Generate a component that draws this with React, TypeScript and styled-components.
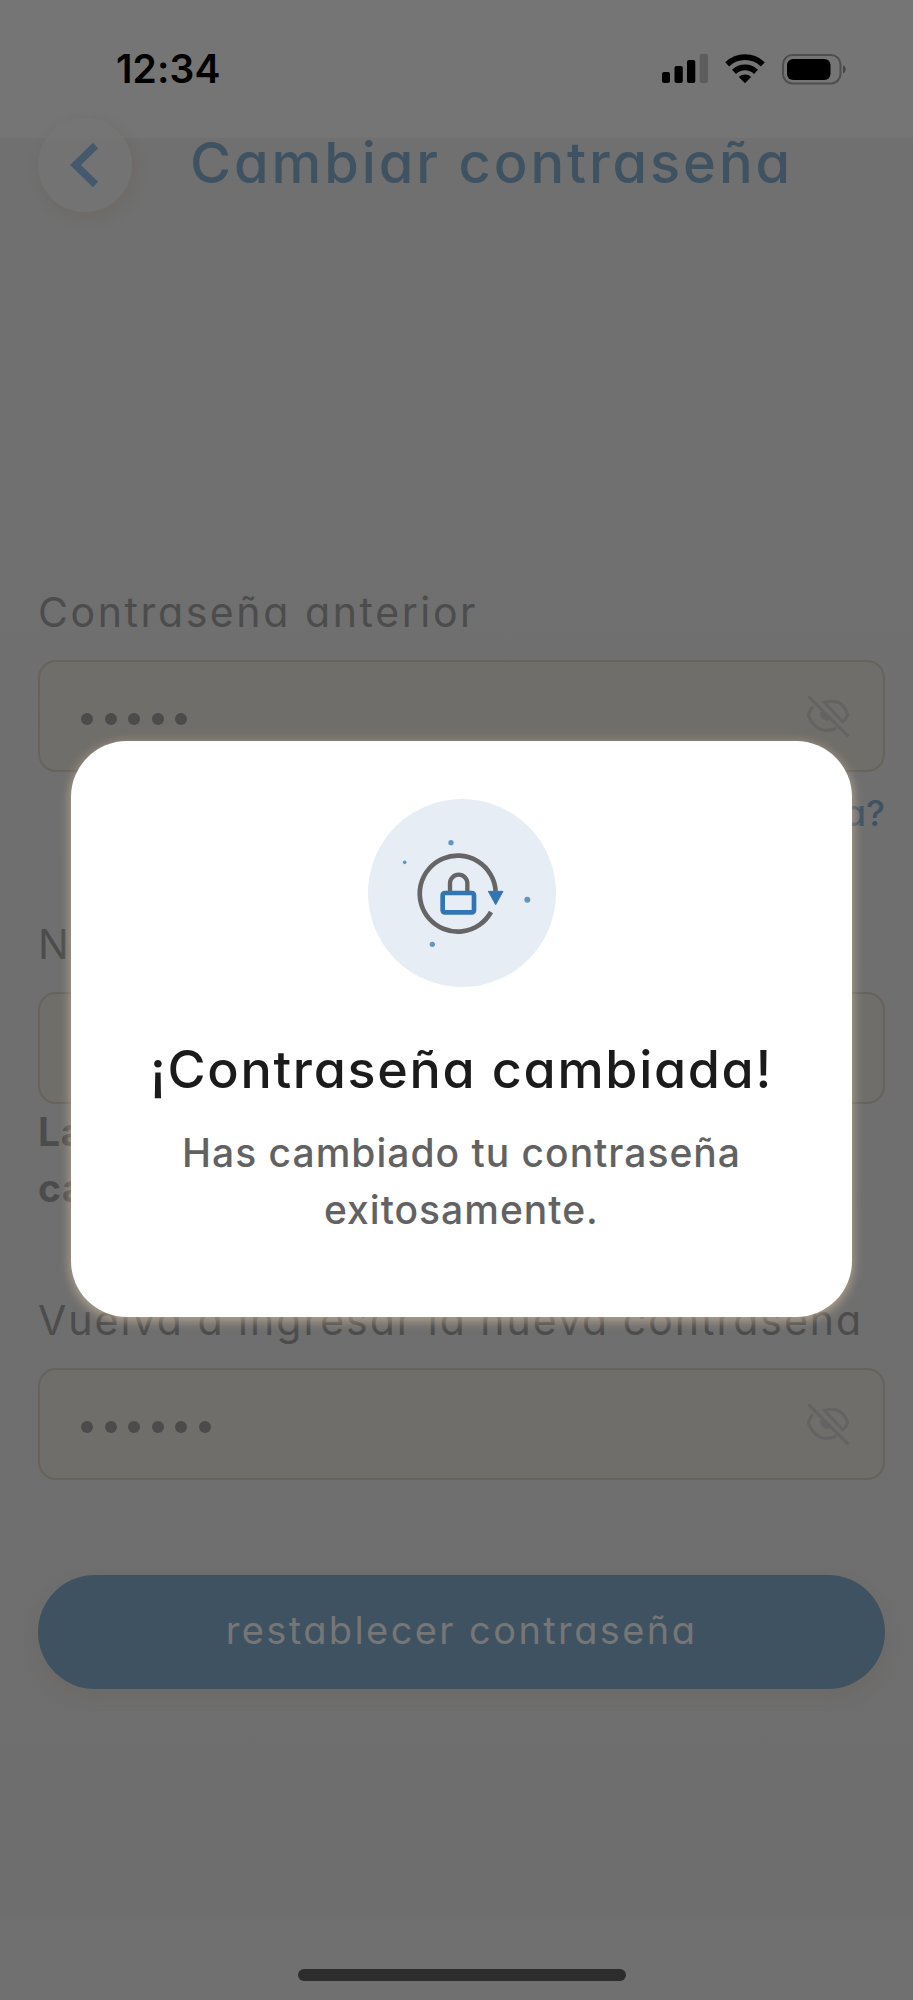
import React from 'react';
import styled, { createGlobalStyle } from 'styled-components';

const GlobalStyle = createGlobalStyle`
  *, *::before, *::after { box-sizing: border-box; }
  body {
    margin: 0;
    background: #707070;
    font-family: Inter, 'Liberation Sans', sans-serif;
  }
`;

const rounded = `
  font-family: Inter, 'Liberation Sans', sans-serif;
  font-feature-settings: 'cv11' 1;
`;

const Screen = styled.div`
  width: 913px;
  height: 2000px;
  display: flex;
  flex-direction: column;
  overflow: hidden;
  background: linear-gradient(#757575 138px, #707070 138px, #6e6e6e 1918px, #707070 1920px);
`;

const StatusBar = styled.header`
  height: 118px;
  padding: 41px 66px 0 116px;
  display: flex;
  align-items: flex-start;
  justify-content: space-between;
`;

const Clock = styled.span`
  font-size: 39px;
  line-height: 56px;
  font-weight: 600;
  letter-spacing: 0.1px;
  color: #000;
`;

const StatusIcons = styled.div`
  height: 56px;
  display: flex;
  align-items: center;
  gap: 17px;
`;

const TitleBar = styled.div`
  height: 94px;
  padding-left: 38px;
  display: flex;
  align-items: center;
`;

const BackButton = styled.button`
  width: 94px;
  height: 94px;
  padding: 0;
  border: 0;
  border-radius: 50%;
  display: grid;
  place-items: center;
  background: linear-gradient(#757575 20px, #737373 20px);
  box-shadow: 3px 5px 12px rgba(105, 94, 80, 0.3);
`;

const PageTitle = styled.h1`
  ${rounded}
  margin: 0 0 5px 58px;
  font-size: 56px;
  line-height: 64px;
  font-weight: 450;
  letter-spacing: 2.9px;
  white-space: nowrap;
  color: #3f5261;
`;

const Form = styled.form`
  padding: 375px 28px 0 38px;
  display: flex;
  flex-direction: column;
`;

const Label = styled.label<{ $gap?: number; $spacing: number }>`
  ${rounded}
  margin-top: ${(p) => p.$gap ?? 0}px;
  padding-top: 1px;
  font-size: 41px;
  line-height: 48px;
  height: 48px;
  letter-spacing: ${(p) => p.$spacing}px;
  white-space: nowrap;
  color: #4c4c4c;
`;

const Field = styled.div`
  height: 112px;
  margin-top: 25px;
  padding: 0 33px 0 41px;
  border: 2px solid #67625d;
  border-radius: 18px;
  background: #706e6a;
  display: flex;
  align-items: center;
  justify-content: space-between;
`;

const Dots = styled.div`
  display: flex;
  gap: 11.5px;
  padding-top: 6px;
`;

const Dot = styled.i`
  width: 12px;
  height: 12px;
  border-radius: 50%;
  background: #4b4b4b;
`;

const ForgotLink = styled.a`
  ${rounded}
  margin-top: 17px;
  align-self: flex-end;
  font-size: 36px;
  line-height: 48px;
  font-weight: 450;
  white-space: nowrap;
  color: #3f5261;
`;

const Hint = styled.p`
  margin: 0;
  font-size: 39px;
  line-height: 56px;
  font-weight: 700;
  letter-spacing: 0.6px;
  color: #4c4c4c;
`;

const SubmitButton = styled.button`
  ${rounded}
  height: 114px;
  margin-top: 95px;
  padding: 0 0 5px;
  border: 0;
  border-radius: 57px;
  font-size: 38px;
  line-height: 48px;
  letter-spacing: 2.4px;
  color: #767676;
  background: #3f5261;
  box-shadow: 0 8px 14px rgba(108, 96, 80, 0.25);
`;

const HomeIndicator = styled.div`
  width: 328px;
  height: 12px;
  margin: auto 0 19px 298px;
  border-radius: 6px;
  background: #2d2d2d;
`;

const Overlay = styled.div`
  position: absolute;
  top: 0;
  left: 0;
  width: 913px;
  height: 2000px;
  padding: 741px 61px 0 71px;
`;

const Dialog = styled.section`
  height: 576px;
  padding-top: 58px;
  border-radius: 56px;
  display: flex;
  flex-direction: column;
  align-items: center;
  background: #fff;
  box-shadow: 0 3px 12px rgba(222, 196, 165, 0.7);
`;

const DialogTitle = styled.h2`
  ${rounded}
  margin: 51px 0 0;
  font-size: 52px;
  line-height: 64px;
  font-weight: 450;
  letter-spacing: 1.7px;
  white-space: nowrap;
  color: #1b1b1b;
`;

const DialogText = styled.p`
  margin: 22px 0 0;
  font-size: 39px;
  line-height: 57px;
  font-weight: 450;
  letter-spacing: 1px;
  text-align: center;
  color: #626262;
`;

const Signal = () => (
  <svg width="46" height="30" viewBox="0 0 46 30">
    <rect x="0" y="18" width="8" height="11" rx="2" />
    <rect x="12.5" y="12" width="8.3" height="17" rx="2" />
    <rect x="25" y="6" width="8.3" height="23" rx="2" />
    <rect x="37.7" y="0" width="8.3" height="29" rx="2" fill="#5d5d5d" />
  </svg>
);

const Wifi = () => (
  <svg width="40" height="30" viewBox="0 0 40 30">
    <g fill="none" stroke="#000" strokeWidth="5.8">
      <path d="M2.2 10.4a25.6 25.6 0 0 1 35.6 0" />
      <path d="M9 17.8a16 16 0 0 1 22 0" />
    </g>
    <path d="M20 29.2l-6.2-6.3a9 9 0 0 1 12.4 0z" />
  </svg>
);

const Battery = () => (
  <svg width="65" height="31" viewBox="0 0 65 31">
    <rect x="1" y="1" width="57.5" height="28.6" rx="9.5" fill="none" stroke="#4e4e4e" strokeWidth="2" />
    <rect x="5" y="5" width="43.5" height="21" rx="6" />
    <path d="M61 11.2c3.6 1.4 3.6 6.8 0 8.2z" fill="#454545" />
  </svg>
);

const Chevron = () => (
  <svg width="30" height="46" viewBox="0 0 30 46">
    <path d="M25.5 3.5L5.5 23l20 19.5" fill="none" stroke="#445a6c" strokeWidth="7.5" />
  </svg>
);

const EyeOff = () => (
  <svg width="43" height="43" viewBox="624 432 129 129">
    <g fill="none" stroke="#636363" strokeWidth="9">
      <path d="M628 436L748 556" />
      <path d="M641 466Q632 478 628 492Q646 538 684 538Q699 538 712 531" />
      <path d="M676 454Q730 440 746 492Q741 505 731 512Z" />
      <path d="M671 484Q668 502 690 504" strokeWidth="14" />
    </g>
  </svg>
);

const ResetBadge = () => (
  <svg width="188" height="188" viewBox="82 56 564 564">
    <circle cx="364" cy="338" r="282" fill="#e6edf4" />
    <g fill="none" stroke="#656565">
      <path d="M465 332A114 114 0 1 0 451 395" strokeWidth="14" />
      <path d="M328 336V309a26 26 0 0 1 52 0v27" strokeWidth="13" />
    </g>
    <rect x="306" y="338" width="94" height="58" rx="6" fill="none" stroke="#3275b5" strokeWidth="14" />
    <path d="M443 333h44l-22 40z" fill="#3275b5" stroke="#3275b5" strokeWidth="3" strokeLinejoin="round" />
    <g fill="#6496bd">
      <circle cx="331" cy="187" r="8" />
      <circle cx="192" cy="246" r="5.5" />
      <circle cx="560" cy="358" r="9" />
      <circle cx="275" cy="492" r="8" />
    </g>
  </svg>
);

const PasswordField = ({ count }: { count: number }) => (
  <Field>
    <Dots>
      {Array.from({ length: count }, (_, i) => (
        <Dot key={i} />
      ))}
    </Dots>
    <EyeOff />
  </Field>
);

export default function App() {
  return (
    <>
      <GlobalStyle />
      <Screen>
        <StatusBar>
          <Clock>12:34</Clock>
          <StatusIcons>
            <Signal />
            <Wifi />
            <Battery />
          </StatusIcons>
        </StatusBar>
        <TitleBar>
          <BackButton aria-label="Volver">
            <Chevron />
          </BackButton>
          <PageTitle>Cambiar contraseña</PageTitle>
        </TitleBar>
        <Form>
          <Label $spacing={2.6}>Contraseña anterior</Label>
          <PasswordField count={5} />
          <ForgotLink>¿Olvidaste tu contraseña?</ForgotLink>
          <Label $gap={82} $spacing={2.6}>Nueva contraseña</Label>
          <PasswordField count={6} />
          <Hint>
            La clave
            <br />
            caduca
          </Hint>
          <Label $gap={79} $spacing={2}>Vuelva a ingresar la nueva contraseña</Label>
          <PasswordField count={6} />
          <SubmitButton type="button">restablecer contraseña</SubmitButton>
        </Form>
        <HomeIndicator />
      </Screen>
      <Overlay>
        <Dialog role="dialog">
          <ResetBadge />
          <DialogTitle>¡Contraseña cambiada!</DialogTitle>
          <DialogText>
            Has cambiado tu contraseña
            <br />
            exitosamente.
          </DialogText>
        </Dialog>
      </Overlay>
    </>
  );
}
